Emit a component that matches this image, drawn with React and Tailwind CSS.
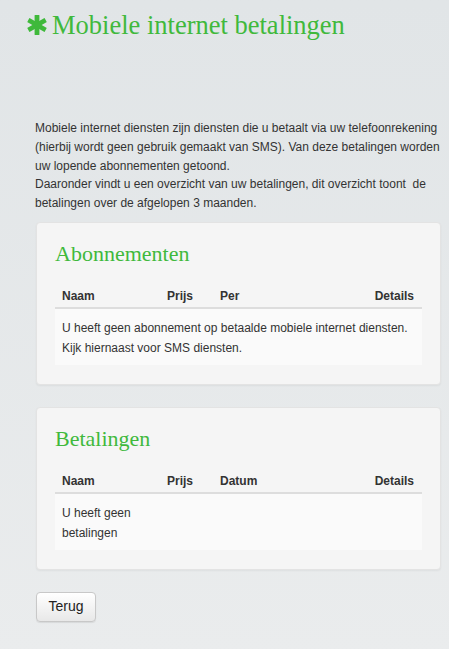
const serif = { fontFamily: '"Liberation Serif", Georgia, serif' }

function Asterisk() {
  return (
    <svg width="20" height="20" viewBox="0 0 20 20" className="shrink-0">
      <g fill="#3fb93b">
        <rect x="7.6" y="0" width="4.8" height="20" rx="0.5" />
        <rect x="7.6" y="0" width="4.8" height="20" rx="0.5" transform="rotate(60 10 10)" />
        <rect x="7.6" y="0" width="4.8" height="20" rx="0.5" transform="rotate(-60 10 10)" />
      </g>
    </svg>
  )
}

function Panel({ title, third, children }) {
  return (
    <div className="rounded-[4px] border border-[#e3e3e3] bg-[#f5f5f5] px-[18px] pt-[16px] pb-[19px] shadow-[0_1px_2px_rgba(0,0,0,0.05)]">
      <h2 className="text-[22px] leading-[30px] text-[#40b93c]" style={serif}>{title}</h2>
      <table className="mt-[18px] w-full border-collapse text-[12px] text-[#333]">
        <thead>
          <tr className="border-b-2 border-[#dddddd]">
            <th className="w-[104px] px-[7px] pb-[2px] text-left font-bold">Naam</th>
            <th className="w-[53px] px-[8px] pb-[2px] text-left font-bold">Prijs</th>
            <th className="px-[8px] pb-[2px] text-left font-bold">{third}</th>
            <th className="px-[8px] pb-[2px] text-right font-bold">Details</th>
          </tr>
        </thead>
        <tbody>
          <tr className="bg-[#fafafa]">{children}</tr>
        </tbody>
      </table>
    </div>
  )
}

export default function App() {
  return (
    <div
      className="min-h-[649px] bg-gradient-to-b from-[#e1e5e7] to-[#eaeced] pb-[29px] text-[#333]"
      style={{ fontFamily: '"Liberation Sans", Arial, sans-serif' }}
    >
      <div className="flex items-center gap-[5px] pl-[27px] pt-[8px]">
        <Asterisk />
        <h1 className="text-[26.5px] leading-[34px] text-[#40b93c]" style={serif}>
          Mobiele internet betalingen
        </h1>
      </div>

      <div className="ml-[36px] mr-[8px] mt-[77px]">
        <p className="-ml-[1px] text-[12px] leading-[18.75px]">
          Mobiele internet diensten zijn diensten die u betaalt via uw telefoonrekening (hierbij wordt geen gebruik gemaakt van SMS). Van deze betalingen worden uw lopende abonnementen getoond.
          <br />
          Daaronder vindt u een overzicht van uw betalingen, dit overzicht toont&nbsp; de betalingen over de afgelopen 3 maanden.
        </p>

        <div className="mt-[9px] flex flex-col gap-[22px]">
          <Panel title="Abonnementen" third="Per">
            <td colSpan={4} className="px-[7px] pt-[9px] pb-[7px] leading-[20px]">
              U heeft geen abonnement op betaalde mobiele internet diensten.
              <br />
              Kijk hiernaast voor SMS diensten.
            </td>
          </Panel>

          <Panel title="Betalingen" third="Datum">
            <td className="px-[7px] pt-[9px] pb-[7px] leading-[20px]">U heeft geen betalingen</td>
            <td></td>
            <td></td>
            <td></td>
          </Panel>
        </div>

        <button className="mt-[22px] h-[30px] w-[60px] rounded-[4px] border border-[#c8c8c8] bg-gradient-to-b from-white to-[#e8e8e8] text-[14px] text-[#222] shadow-[0_1px_1px_rgba(0,0,0,0.08)]">
          Terug
        </button>
      </div>
    </div>
  )
}
